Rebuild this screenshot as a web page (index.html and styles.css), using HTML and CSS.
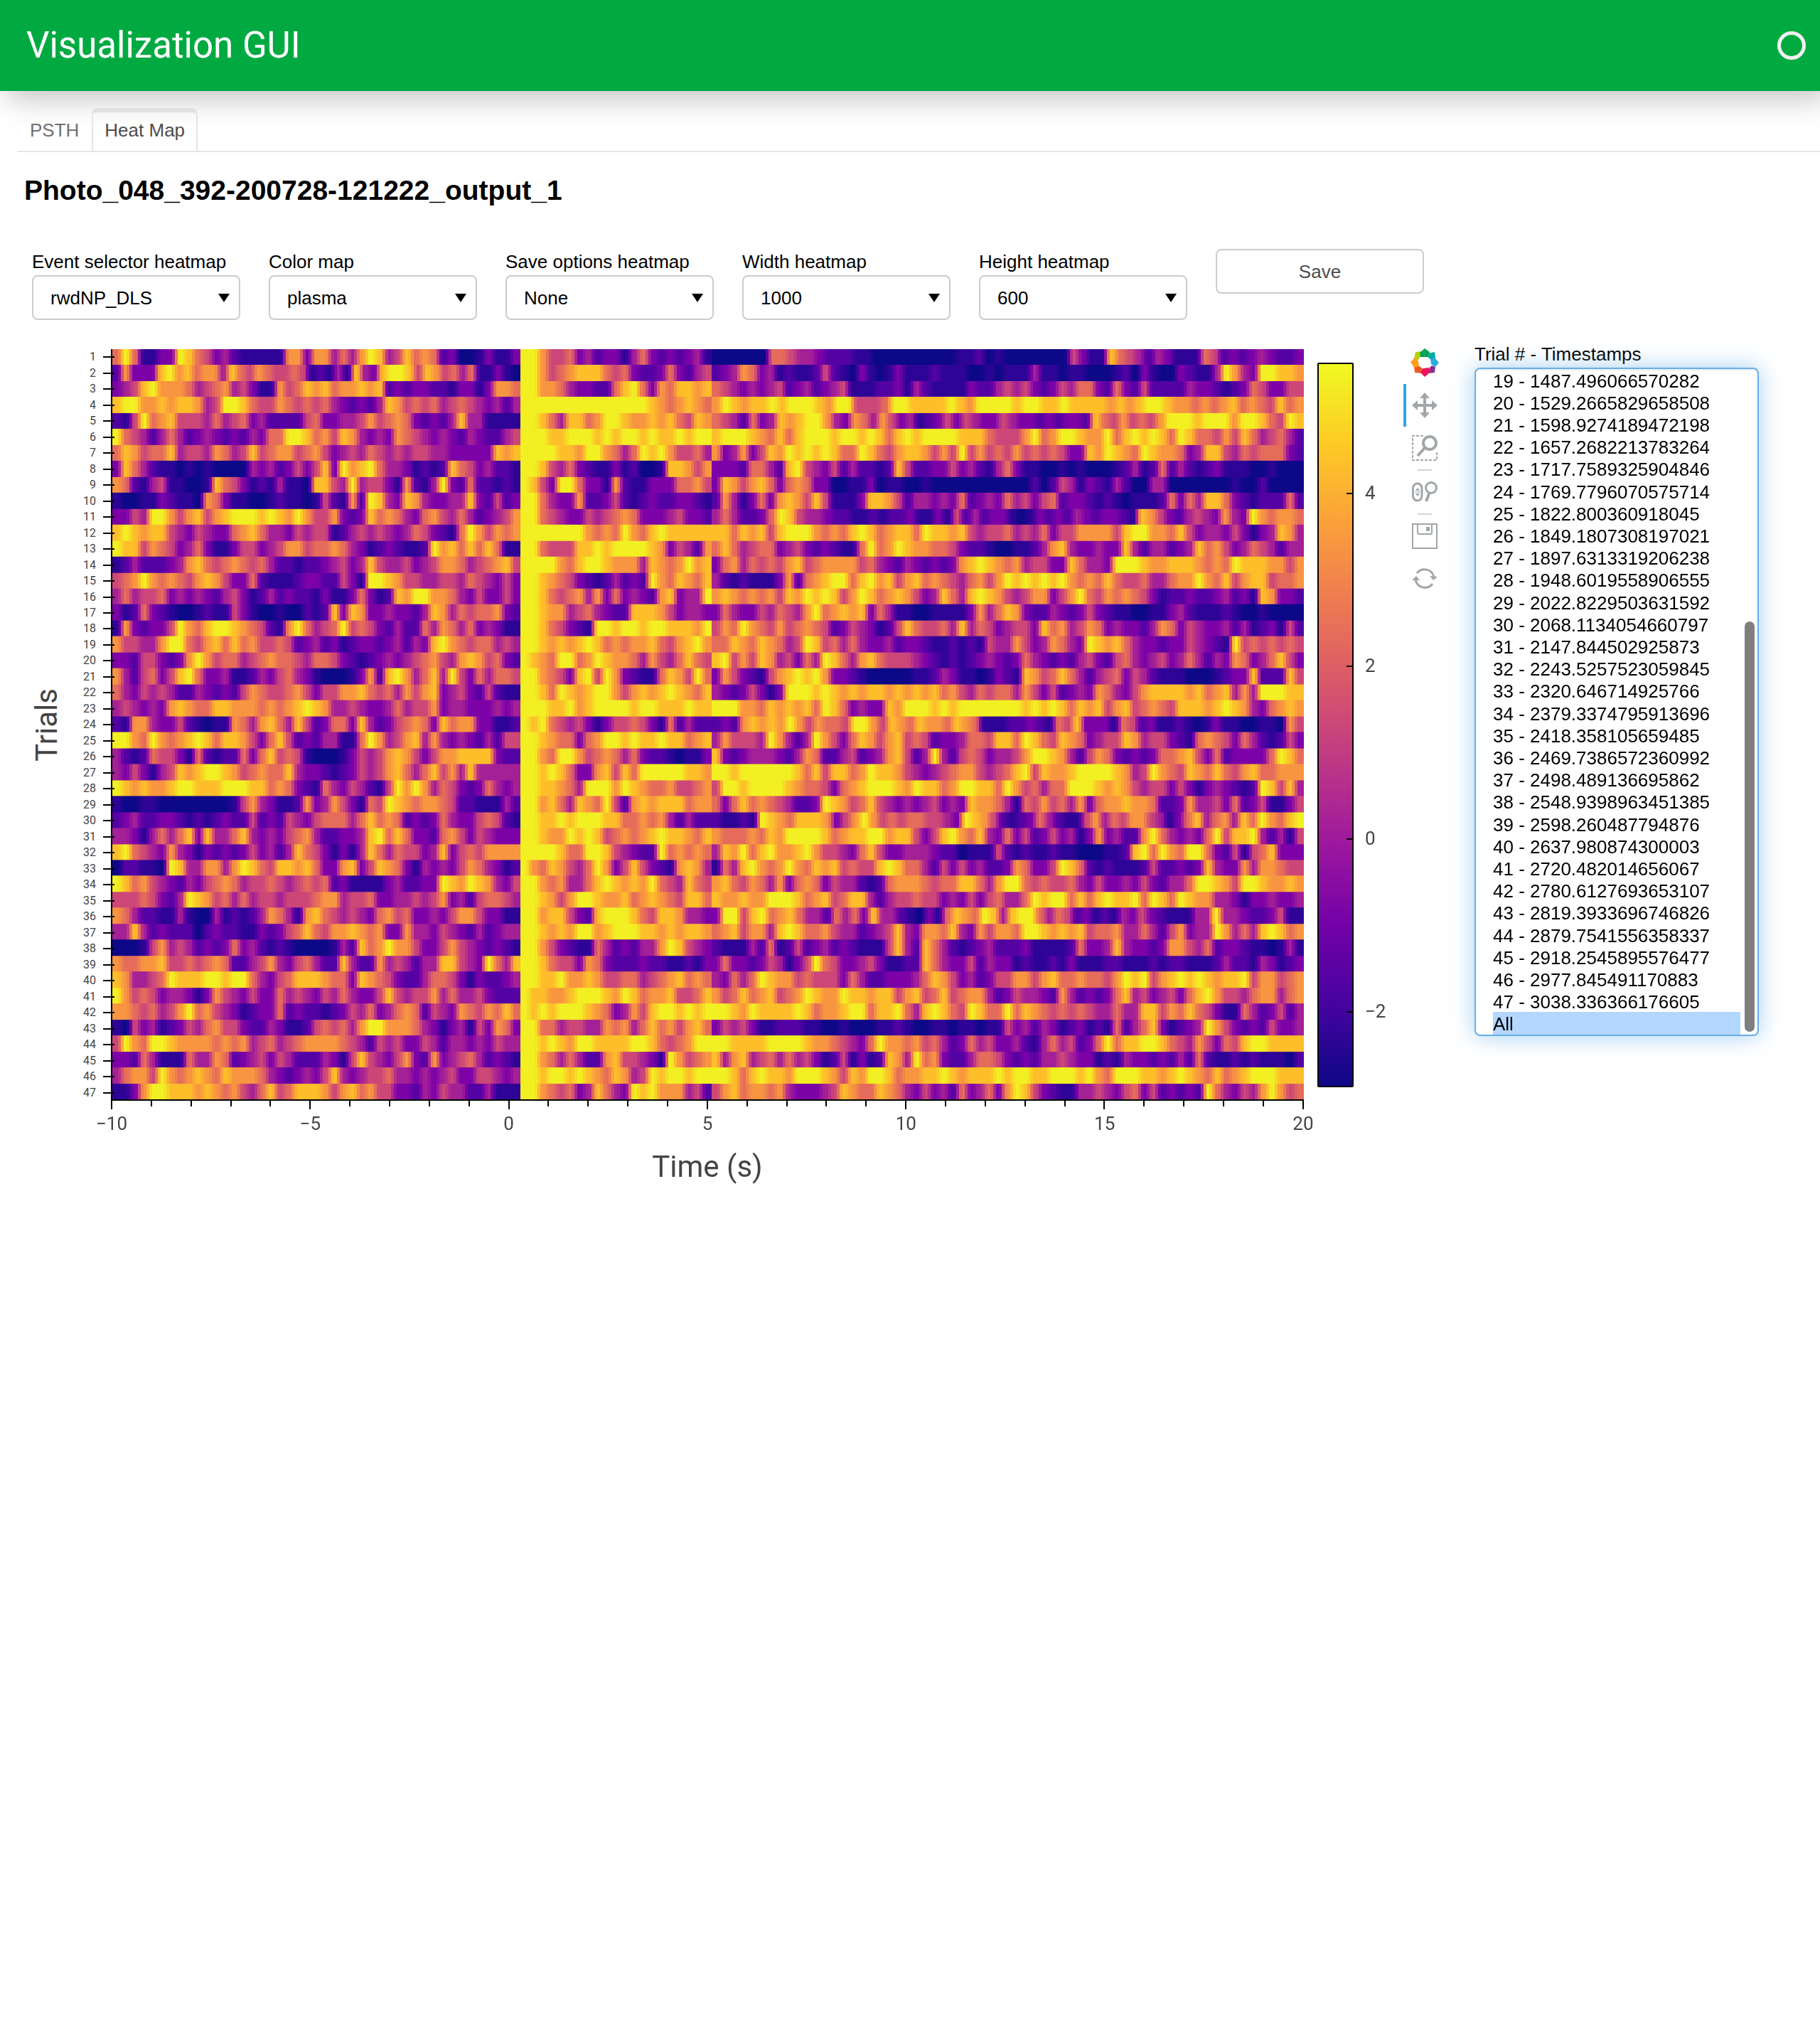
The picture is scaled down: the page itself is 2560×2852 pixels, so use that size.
FILE: index.html
```html
<!DOCTYPE html>
<html lang="en">
<head>
<meta charset="utf-8">
<title>Visualization GUI</title>
<link rel="stylesheet" href="styles.css">
</head>
<body>
<header class="topbar">
  <h1 class="app-title">Visualization GUI</h1>
  <span class="busy"></span>
</header>
<main>
  <nav class="tabs">
    <button class="tab" type="button">PSTH</button>
    <button class="tab active" type="button">Heat Map</button>
  </nav>
  <h2 class="session">Photo_048_392-200728-121222_output_1</h2>

  <div class="controls">
    <div class="field">
      <label for="event">Event selector heatmap</label>
      <div class="picker"><select id="event"><option>rwdNP_DLS</option></select></div>
    </div>
    <div class="field">
      <label for="cmap">Color map</label>
      <div class="picker"><select id="cmap"><option>plasma</option></select></div>
    </div>
    <div class="field">
      <label for="saveopt">Save options heatmap</label>
      <div class="picker"><select id="saveopt"><option>None</option></select></div>
    </div>
    <div class="field">
      <label for="width">Width heatmap</label>
      <div class="picker"><select id="width"><option>1000</option></select></div>
    </div>
    <div class="field">
      <label for="height">Height heatmap</label>
      <div class="picker"><select id="height"><option>600</option></select></div>
    </div>
    <button class="save" type="button">Save</button>
  </div>

  <div class="workspace">
    <section class="plot">
      <div class="y-title"><span>Trials</span></div>
      <ol class="y-axis" id="y-axis"></ol>
      <canvas class="heat" id="heat" width="1676" height="1056"></canvas>
      <div class="x-ticks" id="x-ticks"></div>
      <div class="x-labels"><span>−10</span><span>−5</span><span>0</span><span>5</span><span>10</span><span>15</span><span>20</span></div>
      <div class="x-title">Time (s)</div>
    </section>

    <div class="colorbar">
      <div class="ramp"><i></i><i></i><i></i><i></i></div>
      <div class="ramp-labels"><span>4</span><span>2</span><span>0</span><span>−2</span></div>
    </div>

    <div class="toolbar">
      <a class="tool" href="#" aria-label="Bokeh">
        <svg width="40" height="40" viewBox="0 0 40 40">
          <path fill="#b5d00c" d="M7 5L16 4L14 12L9 18L5 14Z"/>
          <path fill="#00a8a8" d="M24 7L34 5L35 14L30 17L23 11Z"/>
          <path fill="#00a651" d="M20 0L27 5L24 12L14 12L13 6Z"/>
          <path fill="#8a2f8f" d="M30 24L35 26L34 34L25 35L27 27Z"/>
          <path fill="#29abe2" d="M34 13L40 20L35 26L29 22L28 15Z"/>
          <path fill="#f15a24" d="M5 25L11 24L18 29L16 35L6 34Z"/>
          <path fill="#ff9f1c" d="M0 19L6 13L11 18L12 25L5 27Z"/>
          <path fill="#ed145b" d="M14 34L18 28L26 27L27 34L20 40Z"/>
        </svg>
      </a>
      <button class="tool on" type="button" aria-label="Pan">
        <svg width="36" height="36" viewBox="0 0 36 36" fill="#a1a6a9">
          <path d="M18 0L25 8H20V16H28V11L36 18L28 25V20H20V28H25L18 36L11 28H16V20H8V25L0 18L8 11V16H16V8H11Z"/>
        </svg>
      </button>
      <button class="tool" type="button" aria-label="Box Zoom">
        <svg width="36" height="36" viewBox="0 0 36 36" fill="none" stroke="#a1a6a9">
          <path stroke-width="2" stroke-dasharray="4 2" d="M16 1H1V35H35V23"/>
          <circle cx="25" cy="11" r="9" stroke-width="4"/>
          <path stroke-width="4" d="M18 18L8 29"/>
        </svg>
      </button>
      <hr class="rule">
      <button class="tool" type="button" aria-label="Wheel Zoom">
        <svg width="36" height="36" viewBox="0 0 36 36" fill="none" stroke="#a1a6a9">
          <rect x="1.5" y="6" width="12.5" height="24" rx="6.2" stroke-width="3"/>
          <circle cx="27" cy="12" r="7.5" stroke-width="3"/>
          <path stroke-width="4" d="M24.500 19L20 31"/>
          <path stroke-width="1" d="M4 18H12"/>
          <path fill="#a1a6a9" stroke="none" d="M8 12L11 16H5ZM8 24L11 20H5Z"/>
        </svg>
      </button>
      <hr class="rule">
      <button class="tool" type="button" aria-label="Save">
        <svg width="36" height="36" viewBox="0 0 36 36" fill="none" stroke="#a1a6a9" stroke-width="2">
          <rect x="1" y="1" width="34" height="34"/>
          <path d="M8 1V13Q8 15 10 15H26Q28 15 28 13V1"/>
          <rect x="20" y="5" width="5" height="6" fill="#a1a6a9" stroke="none"/>
        </svg>
      </button>
      <button class="tool" type="button" aria-label="Reset">
        <svg width="36" height="36" viewBox="0 0 36 36" fill="none" stroke="#a1a6a9" stroke-width="3">
          <path d="M7 10A13.500 13.500 0 0 1 31 16M29 25A13.500 13.500 0 0 1 5 19"/>
          <path fill="#a1a6a9" stroke="none" d="M25 14L36 15L30 20ZM6 14L11 20L0 20Z"/>
        </svg>
      </button>
    </div>

    <div class="trials">
      <label for="trials">Trial # - Timestamps</label>
      <div class="listwrap">
        <select id="trials" multiple size="30">
          <option>19 - 1487.496066570282</option>
          <option>20 - 1529.2665829658508</option>
          <option>21 - 1598.9274189472198</option>
          <option>22 - 1657.2682213783264</option>
          <option>23 - 1717.7589325904846</option>
          <option>24 - 1769.7796070575714</option>
          <option>25 - 1822.800360918045</option>
          <option>26 - 1849.1807308197021</option>
          <option>27 - 1897.6313319206238</option>
          <option>28 - 1948.6019558906555</option>
          <option>29 - 2022.8229503631592</option>
          <option>30 - 2068.1134054660797</option>
          <option>31 - 2147.844502925873</option>
          <option>32 - 2243.5257523059845</option>
          <option>33 - 2320.646714925766</option>
          <option>34 - 2379.3374795913696</option>
          <option>35 - 2418.358105659485</option>
          <option>36 - 2469.7386572360992</option>
          <option>37 - 2498.489136695862</option>
          <option>38 - 2548.9398963451385</option>
          <option>39 - 2598.260487794876</option>
          <option>40 - 2637.980874300003</option>
          <option>41 - 2720.482014656067</option>
          <option>42 - 2780.6127693653107</option>
          <option>43 - 2819.3933696746826</option>
          <option>44 - 2879.7541556358337</option>
          <option>45 - 2918.2545895576477</option>
          <option>46 - 2977.845491170883</option>
          <option>47 - 3038.336366176605</option>
          <option selected>All</option>
        </select>
        <span class="thumb"></span>
      </div>
    </div>
  </div>
</main>
<script src="heatmap.js"></script>
</body>
</html>
```
FILE: styles.css
```css
* { box-sizing: border-box; }

body {
  margin: 0;
  background: #fff;
  color: #000;
  font: 26px/30px "Liberation Sans", Arial, sans-serif;
}

button, select { font: inherit; }

.topbar {
  display: flex;
  align-items: center;
  justify-content: space-between;
  height: 128px;
  padding: 0 20px 0 37px;
  background: #00aa41;
  box-shadow: 10px 10px 40px silver;
}

.app-title {
  margin: 0;
  color: #fff;
  font: 400 51px/60px Roboto, sans-serif;
}

.busy {
  width: 40px;
  height: 40px;
  border: 5px solid #f0f0f0;
  border-radius: 50%;
}

.tabs {
  display: flex;
  margin: 24px 0 0 24px;
  border-bottom: 2px solid #e6e6e6;
}

.tab {
  height: 60px;
  padding: 0 16px 4px;
  border: 2px solid transparent;
  border-top-width: 6px;
  border-bottom: 0;
  border-radius: 8px 8px 0 0;
  background: none;
  color: #707070;
}

.tab.active {
  border-color: #e0e0e0 #e6e6e6;
  color: #4d4d4d;
}

.session {
  margin: 31px 0 60px 34px;
  font-size: 39px;
  line-height: 45px;
}

.controls {
  display: flex;
  gap: 40px;
  padding-left: 45px;
}

.field { width: 293px; }

.field label {
  display: block;
  margin: 3px 0 4px;
}

.picker { position: relative; }

.picker::after {
  content: "";
  position: absolute;
  right: 15px;
  top: 26px;
  width: 16px;
  height: 12px;
  background: #000;
  clip-path: polygon(0 0, 100% 0, 50% 100%);
  pointer-events: none;
}

.picker select {
  display: block;
  width: 100%;
  height: 63px;
  padding: 0 24px;
  border: 2px solid #ccc;
  border-radius: 8px;
  background: #fff;
  color: #000;
  appearance: none;
}

.save {
  width: 293px;
  height: 63px;
  border: 2px solid #ccc;
  border-radius: 8px;
  background: #fff;
  color: #4d4d4d;
}

.workspace {
  display: flex;
  align-items: flex-start;
  padding: 30px 0 0 38px;
}

.plot {
  display: grid;
  grid-template-columns: 56px 62px 1678px;
  padding-top: 11px;
  color: #444;
  font-family: Roboto, sans-serif;
}

.y-title {
  display: flex;
  align-items: center;
  font-size: 42px;
  line-height: 56px;
}

.y-title span {
  writing-mode: vertical-rl;
  transform: rotate(180deg);
}

.y-axis {
  display: flex;
  flex-direction: column;
  margin: 0;
  padding: 0;
  list-style: none;
  font-size: 16px;
  line-height: 20px;
}

.y-axis li {
  display: flex;
  flex: 1;
  align-items: center;
  justify-content: flex-end;
  gap: 10px;
  margin-right: -5px;
}

.y-axis li::after {
  content: "";
  z-index: 1;
  width: 16px;
  height: 2px;
  background: #000;
}

.heat {
  display: block;
  width: 100%;
  height: 1057px;
  border-left: 2px solid #000;
  border-bottom: 2px solid #000;
}

.x-ticks, .x-labels, .x-title { grid-column: 3; }

.x-ticks {
  display: flex;
  justify-content: space-between;
  height: 12px;
}

.x-ticks i {
  width: 2px;
  height: 8px;
  background: #000;
}

.x-ticks i.major { height: 12px; }

.x-labels {
  display: flex;
  justify-content: space-between;
  margin-top: 5px;
}

.x-labels span {
  display: flex;
  justify-content: center;
  width: 2px;
  white-space: nowrap;
}

.x-title {
  margin-top: 22px;
  font-size: 42px;
  line-height: 48px;
  text-align: center;
}

.colorbar {
  display: flex;
  gap: 16px;
  width: 121px;
  margin: 30px 0 0 19px;
  color: #444;
  font-family: Roboto, sans-serif;
}

.ramp {
  display: flex;
  flex-direction: column;
  flex: none;
  width: 51px;
  height: 1019px;
  padding-top: 60px;
  border: 2px solid #000;
  border-radius: 2px;
  background: linear-gradient(#f0f921, #fdca26, #fb9f3a, #ed7953, #d8576b, #bd3786, #9c179e, #7201a8, #46039f, #0d0887);
}

.ramp i {
  display: flex;
  flex: none;
  align-items: center;
  justify-content: flex-end;
  height: 243px;
}

.ramp i::after {
  content: "";
  width: 8px;
  height: 2px;
  background: #000;
}

.ramp-labels {
  display: flex;
  flex-direction: column;
  padding-top: 62px;
}

.ramp-labels span {
  height: 243px;
  line-height: 243px;
}

.toolbar {
  display: flex;
  flex-direction: column;
  align-items: center;
  width: 60px;
}

.tool {
  display: flex;
  align-items: center;
  justify-content: center;
  width: 60px;
  height: 60px;
  padding: 0 4px 0 0;
  border: 0 solid transparent;
  border-left-width: 4px;
  background: none;
}

.tool.on { border-left-color: #26aae1; }

.rule {
  width: 20px;
  height: 2px;
  margin: 0;
  border: 0;
  background: #d3d3d3;
}

.trials {
  width: 400px;
  margin: 3px 0 0 40px;
}

.trials label {
  display: block;
  margin-bottom: 4px;
}

.listwrap { position: relative; }

.listwrap select {
  display: block;
  width: 100%;
  height: 940px;
  padding: 0 24px;
  overflow: hidden;
  border: 2px solid #66afe9;
  border-radius: 8px;
  outline: 0;
  background: #fff;
  box-shadow: inset 0 2px 2px rgba(0, 0, 0, .075), 0 0 32px rgba(102, 175, 233, .6);
  color: #000;
}

.listwrap option {
  height: 31px;
  min-height: 31px;
  padding: 2px 0 0;
  line-height: 29px;
}

.listwrap option:nth-child(5n) { height: 32px; }

.listwrap option:checked {
  background: linear-gradient(#b3d7ff, #b3d7ff);
  color: #000;
}

.thumb {
  position: absolute;
  right: 6px;
  bottom: 6px;
  width: 14px;
  height: 577px;
  border-radius: 7px;
  background: #7f7f7f;
}
```
FILE: heatmap.js
```js
// One line per trial: baseline samples | first seconds after the event | remainder.
// Each digit is a signal level, 0 (low) to 9 (high).
const trials = `
696113398653421111177377464798458676230013113|997556342331463232341|00000066544322211000000000112010000000531186542431116523234322 3
2733389786774865765565121418438998587564611310|997567888656322363245|23476341211252103101311121110010111411011000120310032114974399887
345897776456745311756878677878232332213313776|997764332268963768878|65434345234234511122314211113224545323546632632522224332123653355
899778788745998655765656432324875656456543424|999999999999998767876|79878898999879955569988889879999899889888878789987767678676586 7
215967855546456342222563344575676323248441111|998648867998778786587|65426348789974376475341235354335433232332865756579998999799865 98
965424642343232436699867587434376543432432245|999889998989989889899|89998768689998998986898999988865557967998779689898698665758645 642
687566845547645856775675345465454554433333878|999988799764698975564|73473587989898669865788757595756575656533879876987763488546566632
386421101010000434235358397896443121286534221|998546321131200188757|33326642895435242212852233534214631100101000124126242123111001000
762145110018653121411088549455317214932622121|985399633172113336675|38757863676330011301100100000000000202541321420044000000010020000
100113211076311001211015217298438743344832523|996433722352123223321|27413637875851113887524434362343645356233212101112636488632122262
335499757857899989879755732386764367546423457|996543354567633345332|46422369854432211212231131524233101323243233218753245437439767 76
898788543543367864435455124545434653216975767|999999976769768988888|88687858999767689867886988785455645463557777589977685344353134874
988576534631135534577566764312321129786868611|996555889899998735427|68645663453232116967987766532210011247843343384244234867534654244
124222347865676564221223453485445345776456785|999976899877748767978|36746565785677775643243232378987674553386443999877888767698887757
567976765787533621112332253199875544554654353|998765321242329768768|42121113726789968978578676546757989898976768655644677976857885667
464556343432453124232213113631287997764353353|998656747363432783449|78767675879898579867875348648987545773579657676531223223423187332
312632100121153100100212838733433248746566732|998774564322888753443|36433546547967878364110011113746873224323532110011342111210010000
173233597689987652179645695653242264764634311|998653219989989988879|57697657567652354312586556484653455386745763433247635433424123152
755447996578686755652342312332342438976566454|998787898676778657897|66876876459856464334233211212154475347643987864332335432195656565
332553237975664567665466532123434567547875632|987699679877647546865|89575874536498647865554321212343236432324532564345346424376346853
742563589633411243564310001372897468495364665|997653895973211687596|37532157898973321000001124311013218756864245635421110001233822285
643545422432325765567535577865647578345325211|998698789975787898768|43235313999898787887878786754656647535234376435788887867847499988
454343787668877767678987445433464557344333434|999889789999899888988|99977687878698634338799989899999998989868785785676588878987436787
217743352101176478648523663842356763867733112|989654531355653162422|23278787975766599758768776876111223216583331652311210131100110 75
997697678986887536852324411697457847434324255|998766367998988988678|47555497424975368757856523346658869865876345587455321676536421253
421265531621226368565100013545787535778888322|997699756764632210113|83234443247622452347852494256534457998742576323236678536233336986
435314587899875676684332123545786468574844444|998986337858699999887|99899999986858867988754345677545689587789999874597658768657866777
987877899888999886763216435421597974653236434|998876499979876675567|59989999876653678999879886799886975646699987875455353134321298584
100110000000015743112734753165987677652211142|997864876952787888677|63686765422398756854343453438776416575647367787762237445362351135
234223321212322523254356664686762323643356521|998898999886676742422|21121987688873579756566554398752123642115746577541368467486976 89
443146468384468434356742233489686332675354333|998779898567678988768|76667687999986788997885358976843635235341373422796434369588942415
896543743132323534248653131486465534835657777|999986699854322967676|48796897789755436853344432201115212112110001128969769963251568333
022110984477479865887863378358763143435764312|976875469735853217874|16489767976878565589866425353422376335986212111252232384337477655
986754324356764556545656231111342233987987435|997674468987879654865|78657647367635442126777656688647996565564353343532446998759987787
555653249875646455455567745563344545734256654|998757998778678765886|87787799986785688424556553435356446989968689889698698774431334334
764221141004121247641786545436756334357753311|997885328999865887443|39958967864426463844210316876984899646523121435321114494432235 11
448423222023221132356865778767337443543242344|998787997899988787887|67857748986675442345843776843757769987878566744642573449746489867
000157454232363421210000142867977533575432321|997532116423244798543|21114261252342321115842864212342223111126334843323775462332110141
766778556567622457435642284227454244885439648|998655376322232211213|36332354135965334531122864335243312112131112211121221112422143123
874456988899899643568887663876532246653132234|998897787556645678676|43646987756555364223334687534235577578667665798957898987889577567
975653443137543533645435464335854557464453222|988778999879867785568|75686785679877988788578568567742354432742323684534536897554677467
776564579675431233623221235463467625437657686|989899987634758998989|99879888898677899688964898659866968765656544644885768653116423524
105341235467553224311256564799777643134153763|996645544767468675786|35453112221100100011210011011011534243123121624683123497532325334
597699877776767456456777765425453354244343544|998987998888998656799|99888899998776543697767564236453342146452369688998654753658998888
332641116447623453542224315854357327345642321|997646422785543197567|84784564645312513128749673224665323244543312143323242621121211102
467759767876877764323435843455644343453355434|998998987687459899899|99868988799987587998677889878889899889998976999887898768678999888
113799888787675468568887578675533243544224111|997656348643989777452|57867767433345876687643534263463798532114454356352323296435479756
`.trim().split("\n").map(line => line.replace(/ /g, "").split("|"));

// Plasma colour map, low to high.
const plasma = [
  [13, 8, 135], [46, 4, 150], [84, 2, 163], [124, 2, 168], [164, 32, 150],
  [204, 71, 120], [229, 108, 91], [248, 149, 64], [253, 190, 42], [242, 240, 34]
];

function colour(v) {
  const c = Math.max(0, Math.min(8.999, v));
  const i = Math.floor(c);
  const f = c - i;
  const mix = k => Math.round(plasma[i][k] * (1 - f) + plasma[i + 1][k] * f);
  return `rgb(${mix(0)},${mix(1)},${mix(2)})`;
}

const canvas = document.getElementById("heat");
const ctx = canvas.getContext("2d");
const rowHeight = canvas.height / trials.length;
const bounds = [0, 574, 843, 1676];
const step = 4;

trials.forEach((parts, row) => {
  const top = Math.round(row * rowHeight);
  const bottom = Math.round((row + 1) * rowHeight);
  parts.forEach((levels, p) => {
    const start = bounds[p];
    const span = bounds[p + 1] - start;
    for (let x = 0; x < span; x += step) {
      const pos = (x + step / 2) / span * levels.length - 0.5;
      const i = Math.floor(pos);
      const f = Math.max(0, Math.min(1, (pos - i - 0.5) * 1.3 + 0.5));
      const a = +levels[Math.max(0, i)];
      const b = +levels[Math.min(levels.length - 1, i + 1)];
      ctx.fillStyle = colour(a * (1 - f) + b * f);
      ctx.fillRect(start + x, top, Math.min(step, span - x), bottom - top);
    }
  });
});

document.getElementById("y-axis").innerHTML =
  trials.map((_, i) => `<li>${i + 1}</li>`).join("");
document.getElementById("x-ticks").innerHTML =
  Array.from({ length: 31 }, (_, i) => `<i${i % 5 ? "" : ' class="major"'}></i>`).join("");
```
